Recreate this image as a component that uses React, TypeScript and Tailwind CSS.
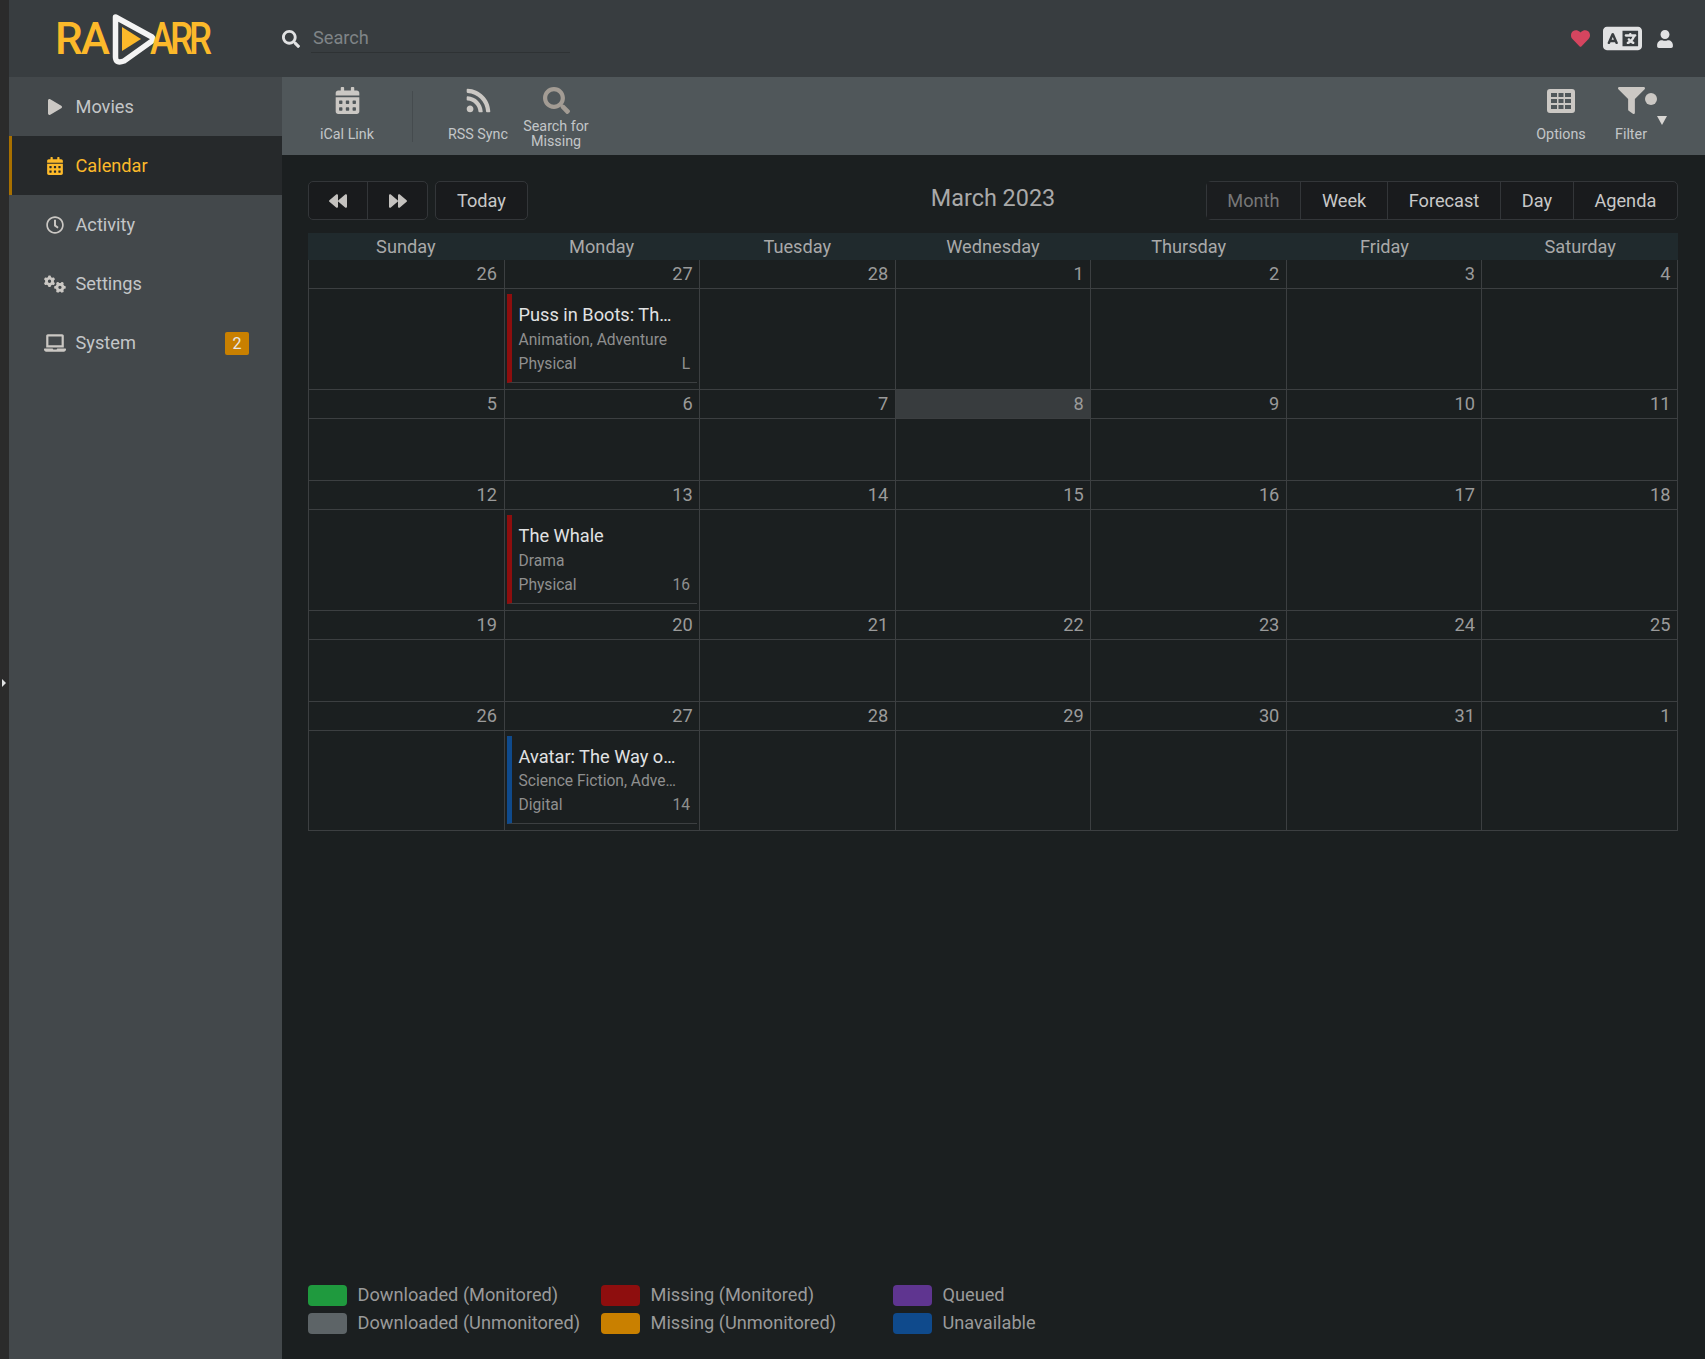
import type { ReactNode } from "react"
import {
    FaBackward,
    FaCalendarAlt,
    FaFilter,
    FaForward,
    FaHeart,
    FaLaptop,
    FaPlay,
    FaRegClock,
    FaRss,
    FaSearch,
    FaUser,
} from "react-icons/fa"
import { FaGears, FaLanguage } from "react-icons/fa6"

type Movie = {
    title: string
    genres: string
    release: string
    cert: string
    bar: string
}

const weeks: { day: number; movie?: Movie; today?: boolean }[][] = [
    [
        { day: 26 },
        {
            day: 27,
            movie: {
                title: "Puss in Boots: Th…",
                genres: "Animation, Adventure",
                release: "Physical",
                cert: "L",
                bar: "border-l-[#8e0e0e]",
            },
        },
        { day: 28 },
        { day: 1 },
        { day: 2 },
        { day: 3 },
        { day: 4 },
    ],
    [
        { day: 5 },
        { day: 6 },
        { day: 7 },
        { day: 8, today: true },
        { day: 9 },
        { day: 10 },
        { day: 11 },
    ],
    [
        { day: 12 },
        {
            day: 13,
            movie: {
                title: "The Whale",
                genres: "Drama",
                release: "Physical",
                cert: "16",
                bar: "border-l-[#8e0e0e]",
            },
        },
        { day: 14 },
        { day: 15 },
        { day: 16 },
        { day: 17 },
        { day: 18 },
    ],
    [
        { day: 19 },
        { day: 20 },
        { day: 21 },
        { day: 22 },
        { day: 23 },
        { day: 24 },
        { day: 25 },
    ],
    [
        { day: 26 },
        {
            day: 27,
            movie: {
                title: "Avatar: The Way o…",
                genres: "Science Fiction, Adve…",
                release: "Digital",
                cert: "14",
                bar: "border-l-[#0f4a8c]",
            },
        },
        { day: 28 },
        { day: 29 },
        { day: 30 },
        { day: 31 },
        { day: 1 },
    ],
]

const dayNames = ["Sunday", "Monday", "Tuesday", "Wednesday", "Thursday", "Friday", "Saturday"]

const legend = [
    { color: "bg-[#1f9a3e]", label: "Downloaded (Monitored)" },
    { color: "bg-[#8e0e0e]", label: "Missing (Monitored)" },
    { color: "bg-[#5f3590]", label: "Queued" },
    { color: "bg-[#5d6467]", label: "Downloaded (Unmonitored)" },
    { color: "bg-[#c98000]", label: "Missing (Unmonitored)" },
    { color: "bg-[#0f4a8c]", label: "Unavailable" },
]

function Logo() {
    return (
        <div className="flex items-center h-[77px] w-[273px] pl-[46px] text-[44px] leading-none font-medium text-[#fcb92a] shrink-0">
            <span className="w-[57px] tracking-[-2px]">RA</span>
            <svg viewBox="0 0 44 54" className="w-[44px] h-[54px] shrink-0">
                <path
                    d="M3.5 5 L40 25 Q42 27 40 29 L12 49 Q3.5 52 3.5 45 Z"
                    fill="none"
                    stroke="#f4f4f4"
                    strokeWidth="5.5"
                    strokeLinejoin="round"
                />
                <path d="M10 15 L29 27 L10 39 Z" fill="#fcb92a" />
            </svg>
            <span className="-ml-[6px] tracking-[-5px] origin-left scale-x-[0.83]">ARR</span>
        </div>
    )
}

function NavItem({
    icon,
    label,
    active,
    badge,
}: {
    icon: ReactNode
    label: string
    active?: boolean
    badge?: string
}) {
    return (
        <div
            className={`flex items-center h-[59px] text-[18.2px] ${active ? "bg-[#26292b] text-[#fcb92a] border-l-[3px] border-[#a87000] pl-[30px]" : "text-[#c3c6c8] pl-[33px]"}`}
        >
            <span className={`w-[26px] flex justify-center ${active ? "text-[#fcb92a]" : "text-[#cbc8c4]"}`}>{icon}</span>
            <span className="ml-[7.5px]">{label}</span>
            {badge && (
                <span className="ml-auto mr-[33px] mt-[2px] w-[24px] h-[23px] rounded-[2px] bg-[#c98000] text-[#e8e8e8] text-[16px] flex items-center justify-center">
                    {badge}
                </span>
            )}
        </div>
    )
}

function ToolButton({
    icon,
    label,
    className,
}: {
    icon: ReactNode
    label: ReactNode
    className?: string
}) {
    return (
        <div className={`flex flex-col items-center pt-[10px] shrink-0 ${className ?? "w-[78px]"}`}>
            <div className="h-[27px] flex items-center justify-center">{icon}</div>
            <div className="mt-[5px] h-[30px] flex items-center text-center text-[14.3px] leading-[15px] text-[#c3c6c8]">
                {label}
            </div>
        </div>
    )
}

function OptionsIcon() {
    return (
        <svg viewBox="0 0 28 24" className="w-[28px] h-[24px]" fill="#cbc8c4" fillRule="evenodd">
            <path d="M3 0 H25 Q28 0 28 3 V21 Q28 24 25 24 H3 Q0 24 0 21 V3 Q0 0 3 0 Z M4 4 V8 H10 V4 Z M11.5 4 V8 H16.5 V4 Z M18 4 V8 H24 V4 Z M4 10 V14 H10 V10 Z M11.5 10 V14 H16.5 V10 Z M18 10 V14 H24 V10 Z M4 16 V20 H10 V16 Z M11.5 16 V20 H16.5 V16 Z M18 16 V20 H24 V16 Z" />
        </svg>
    )
}

function EventCard({ movie }: { movie: Movie }) {
    return (
        <div className={`ml-[2px] mr-[2px] mt-[5px] mb-[6px] h-[88.8px] border-l-[5px] ${movie.bar} border-b border-b-[#3c3f41] pl-[7px] pr-[7px] pt-[9.4px] whitespace-nowrap`}>
            <div className="text-[18.2px] leading-[24.5px] text-[#e1e2e3]">{movie.title}</div>
            <div className="text-[15.6px] leading-[24px] text-[#8f8f8f]">{movie.genres}</div>
            <div className="flex justify-between text-[15.6px] leading-[24px] text-[#8f8f8f]">
                <span>{movie.release}</span>
                <span>{movie.cert}</span>
            </div>
        </div>
    )
}

export default function App() {
    return (
        <div className="flex h-screen overflow-hidden bg-[#1b1f20] font-[Roboto,sans-serif]">
            {/* collapse strip on the far left */}
            <div className="w-[9px] shrink-0 bg-[#2b2b2b] flex items-center pb-[1px]">
                <div className="mt-[8px] border-y-[4px] border-l-[4px] border-y-transparent border-l-[#e1e2e3] ml-[2px]" />
            </div>

            <div className="flex-1 flex flex-col min-w-0">
                <header className="flex items-center h-[77px] bg-[#383d40] shrink-0">
                    <Logo />
                    <FaSearch className="text-[#e1e2e3] shrink-0" size={18} />
                    <div className="ml-[11px] w-[259px] h-[31px] mt-[-2px] border-b border-[#2e3234] text-[18.2px] leading-[31px] pl-[2px] text-[#7f8487]">
                        Search
                    </div>
                    <div className="ml-auto flex items-center pr-[31px]">
                        <FaHeart className="text-[#d5455f]" size={19} />
                        <FaLanguage className="ml-[13px] text-[#e1e2e3]" size={39} />
                        <FaUser className="ml-[14px] text-[#e1e2e3]" size={18} />
                    </div>
                </header>

                <div className="flex-1 flex min-h-0">
                    <nav className="w-[273px] shrink-0 bg-[#43484b]">
                        <NavItem icon={<FaPlay size={16} />} label="Movies" />
                        <NavItem icon={<FaCalendarAlt size={18} />} label="Calendar" active />
                        <NavItem icon={<FaRegClock size={18} />} label="Activity" />
                        <NavItem icon={<FaGears size={22} />} label="Settings" />
                        <NavItem icon={<FaLaptop size={22} />} label="System" badge="2" />
                    </nav>

                    <main className="flex-1 flex flex-col min-w-0">
                        <div className="flex h-[78px] shrink-0 bg-[#50575a] pl-[26px] pr-[43px]">
                            <ToolButton icon={<FaCalendarAlt className="text-[#cbc8c4]" size={27} />} label="iCal Link" />
                            <div className="self-center w-px h-[51px] mx-[26px] bg-[#454b4e]" />
                            <ToolButton icon={<FaRss className="text-[#cbc8c4]" size={27} />} label="RSS Sync" />
                            <ToolButton
                                icon={<FaSearch className="text-[#a39c94]" size={27} />}
                                label={
                                    <span>
                                        Search for
                                        <br />
                                        Missing
                                    </span>
                                }
                            />
                            <div className="ml-auto flex">
                                <ToolButton icon={<OptionsIcon />} label="Options" />
                                <div className="relative">
                                    <ToolButton icon={<FaFilter className="text-[#cbc8c4]" size={27} />} label="Filter" className="w-[62px]" />
                                    <span className="absolute left-[45px] top-[16px] w-[12px] h-[12px] rounded-full bg-[#cbc8c4]" />
                                    <span className="absolute left-[57px] top-[39px] border-x-[5px] border-t-[9px] border-x-transparent border-t-[#d8d6d3]" />
                                </div>
                            </div>
                        </div>

                        <div className="flex-1 flex flex-col min-h-0 pt-[26px] pl-[26px] pr-[27px] pb-[26px]">
                            <div className="grid grid-cols-[1fr_auto_1fr] items-center mb-[13px]">
                                <div className="flex text-[#c8c8c8] text-[18.2px]">
                                    <div className="flex h-[39px] rounded-[5px] border border-[#333639] bg-[#191b1d]">
                                        <span className="w-[59px] flex items-center justify-center border-r border-[#333639]">
                                            <FaBackward size={18} className="text-[#c4c2bf]" />
                                        </span>
                                        <span className="w-[59px] flex items-center justify-center">
                                            <FaForward size={18} className="text-[#c4c2bf]" />
                                        </span>
                                    </div>
                                    <div className="ml-[7px] h-[39px] px-[21px] flex items-center rounded-[5px] border border-[#333639] bg-[#191b1d]">
                                        Today
                                    </div>
                                </div>
                                <h1 className="text-[23.4px] leading-[30px] mt-[-6px] text-[#a9a9a9]">March 2023</h1>
                                <div className="justify-self-end flex h-[39px] rounded-[5px] border border-[#333639] bg-[#191b1d] text-[18.2px] text-[#c8c8c8]">
                                    <span className="px-[20.7px] flex items-center border-r border-[#333639] bg-[#1b1d1f] text-[#777]">Month</span>
                                    <span className="px-[20.7px] flex items-center border-r border-[#333639]">Week</span>
                                    <span className="px-[20.7px] flex items-center border-r border-[#333639]">Forecast</span>
                                    <span className="px-[20.7px] flex items-center border-r border-[#333639]">Day</span>
                                    <span className="px-[20.7px] flex items-center">Agenda</span>
                                </div>
                            </div>

                            <div className="grid grid-cols-7 h-[27px] bg-[#202a2d] text-[18.2px] leading-[27px] text-[#a9a9a9] text-center">
                                {dayNames.map((name) => (
                                    <div key={name}>{name}</div>
                                ))}
                            </div>
                            <div className="border-l border-[#3c3f41]">
                                {weeks.map((week, i) => (
                                    <div key={i} className="grid grid-cols-7 border-b border-[#3c3f41]">
                                        {week.map((cell, j) => (
                                            <div key={j} className="border-r border-[#3c3f41] min-w-0">
                                                <div
                                                    className={`h-[29px] border-b border-[#3c3f41] pr-[6.5px] text-right text-[18.2px] leading-[28px] text-[#9a9a9a] ${cell.today ? "bg-[#383c3e]" : ""}`}
                                                >
                                                    {cell.day}
                                                </div>
                                                {cell.movie ? <EventCard movie={cell.movie} /> : <div className="min-h-[61px]" />}
                                            </div>
                                        ))}
                                    </div>
                                ))}
                            </div>

                            <div className="mt-auto grid grid-cols-[293px_292px_1fr] gap-y-[7px]">
                                {legend.map((item) => (
                                    <div key={item.label} className="flex items-center h-[21px] text-[18.2px] text-[#9a9a9a]">
                                        <span className={`w-[39px] h-[21px] rounded-[4px] mr-[10.5px] mt-[2px] shrink-0 ${item.color}`} />
                                        {item.label}
                                    </div>
                                ))}
                            </div>
                        </div>
                    </main>
                </div>
            </div>
        </div>
    )
}
